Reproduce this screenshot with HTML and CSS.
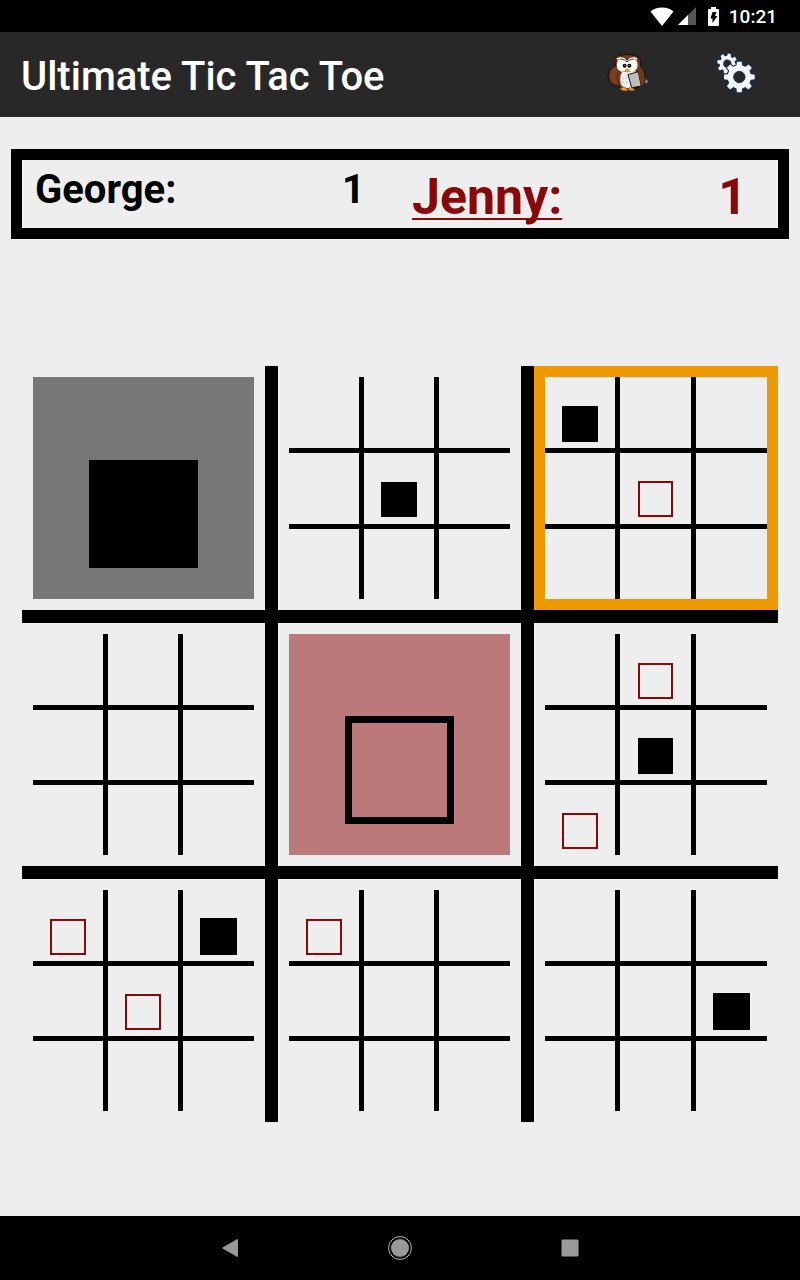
FILE: index.html
```html
<!DOCTYPE html>
<html lang="en">
<head>
  <meta charset="utf-8">
  <meta name="viewport" content="width=device-width, initial-scale=1">
  <title>Ultimate Tic Tac Toe</title>
  <link rel="stylesheet" href="styles.css">
</head>
<body>
  <div class="status-bar">
    <svg class="wifi-icon" viewBox="0 0 24 19" aria-hidden="true"><path fill="#fff" d="M12 19 0.5 4.5C3.5 2 7.5 .5 12 .5s8.500 1.500 11.500 4z"/></svg>
    <svg class="signal-icon" viewBox="0 0 18 18" aria-hidden="true"><path fill="#555" d="M18 0v18H0z"/><path fill="#fff" d="M10 8v10H0z"/></svg>
    <svg class="battery-icon" viewBox="0 0 11 19" aria-hidden="true"><path fill="#fff" d="M3 0h5v2h2q1 0 1 1v15q0 1-1 1H1q-1 0-1-1V3q0-1 1-1h2z"/><path fill="#000" d="M4.500 5h4L7 9h2.500L4.500 16V11.500H2.500z"/></svg>
    <time class="clock">10:21</time>
  </div>

  <header class="app-bar">
    <h1 class="app-title">Ultimate Tic Tac Toe</h1>
    <button class="icon-button" type="button" aria-label="Computer player">
      <svg viewBox="0 0 180 180" aria-hidden="true">
        <path d="M130 98l9 2 3 6 6 1-5 7-11 3z" fill="#8a8a8a" stroke="#111" stroke-width="2"/>
        <path d="M48 36C62 26 103 26 115 37c8 8 9 20 7 28 13 11 17 28 11 48-3 8-10 11-16 10-13 12-45 12-59 1-15 0-29-6-33-24-4-18 5-33 24-38-6-9-7-18-1-26z" fill="#71391b" stroke="#160b05" stroke-width="3"/>
        <path d="M49 63c-15 4-24 18-20 37 3 14 14 20 28 19-8-13-9-31 1-44z" fill="#7c4020" stroke="#3d1d0d" stroke-width="2"/>
        <path d="M67 80c-8 12-9 31-1 43 10 9 31 8 39-1l2-43z" fill="#eee"/>
        <path d="M65 98l8 5M65 108l8 5M76 96l7 5M77 109l7 4" stroke="#aaa" stroke-width="2"/>
        <ellipse cx="67" cy="60" rx="17" ry="20" fill="#fff"/>
        <ellipse cx="96" cy="60" rx="17" ry="20" fill="#fff"/>
        <path d="M51 42q13-7 25 2M86 44q13-9 25-2" fill="none" stroke="#fff" stroke-width="5"/>
        <path d="M61 42q13 0 20 9 7-9 21-9" fill="none" stroke="#71391b" stroke-width="3"/>
        <circle cx="74" cy="62" r="6" fill="#000"/><circle cx="88" cy="62" r="6" fill="#000"/>
        <circle cx="75" cy="61" r="1.500" fill="#fff"/><circle cx="87" cy="61" r="1.500" fill="#fff"/>
        <path d="M75 73q7-5 13 0l-6 12z" fill="#f39b19"/>
        <path d="M84 89l31-9 8 40-1 4-27 4z" fill="#bdbdbd" stroke="#111" stroke-width="3"/>
        <path d="M115 81q19 5 18 31-2 9-10 10z" fill="#71391b"/>
        <path d="M61 133q1-6 6-5 4-1 7 1 5-2 10 6-11 6-23-2zM84 132q4-6 9-3 4-2 7 2 4 1 3 5-10 4-19-4z" fill="#ffa31a" stroke="#9c4f08" stroke-width="2"/>
      </svg>
    </button>
    <button class="icon-button" type="button" aria-label="Settings">
      <svg viewBox="0 0 180 180" aria-hidden="true">
        <defs>
          <g id="gear">
            <circle r="35"/>
            <path id="bar" d="M-7-46H7L10-25V25L7 46H-7L-10 25V-25z"/>
            <use href="#bar" transform="rotate(45)"/>
            <use href="#bar" transform="rotate(90)"/>
            <use href="#bar" transform="rotate(135)"/>
          </g>
        </defs>
        <g transform="translate(64 56) rotate(12) scale(.66)">
          <use href="#gear" fill="#102f5c" stroke="#102f5c" stroke-width="6"/>
          <use href="#gear" fill="#f5f7fa"/>
          <circle r="17" fill="#282828" stroke="#102f5c" stroke-width="3"/>
        </g>
        <g transform="translate(100 96)">
          <use href="#gear" fill="#102f5c" stroke="#102f5c" stroke-width="6"/>
          <use href="#gear" fill="#f5f7fa"/>
          <circle r="17" fill="#282828" stroke="#102f5c" stroke-width="3"/>
        </g>
      </svg>
    </button>
  </header>

  <main class="game">
    <section class="scores" aria-label="Scores">
      <div class="player"><span class="player-name">George:</span><span>1</span></div>
      <div class="player player-active"><span class="player-name">Jenny:</span><span>1</span></div>
    </section>
    <div class="board-area">
      <div class="board" id="board"></div>
    </div>
  </main>

  <nav class="nav-bar" aria-label="System">
    <button class="nav-button" type="button" aria-label="Back"><svg viewBox="0 0 24 24" aria-hidden="true"><path fill="#999" stroke="#999" stroke-linejoin="round" d="M19.500 3.500v17L4.500 12z"/></svg></button>
    <button class="nav-button" type="button" aria-label="Home"><svg viewBox="0 0 24 24" aria-hidden="true"><circle cx="12" cy="12" r="11.400" fill="none" stroke="#bbb"/><circle cx="12" cy="12" r="9" fill="#999"/></svg></button>
    <button class="nav-button" type="button" aria-label="Recent apps"><svg viewBox="0 0 24 24" aria-hidden="true"><rect x="3.500" y="3.500" width="17" height="17" rx="1" fill="#999"/></svg></button>
  </nav>
  <script src="script.js"></script>
</body>
</html>
```

FILE: styles.css
```css
* {
  box-sizing: border-box;
}

body {
  margin: 0;
  min-height: 100vh;
  display: flex;
  flex-direction: column;
  background: #eee;
  color: #000;
  font-family: Roboto, "Noto Sans", sans-serif;
}

button {
  margin: 0;
  padding: 0;
  border: 0;
  background: none;
}

svg {
  display: block;
}

.status-bar {
  height: 32px;
  padding-right: 23px;
  display: flex;
  align-items: center;
  justify-content: flex-end;
  background: #000;
  color: #fff;
}

.wifi-icon {
  width: 24px;
  height: 19px;
  margin-right: 4px;
}

.signal-icon {
  width: 18px;
  height: 18px;
  margin-right: 12px;
}

.battery-icon {
  width: 11px;
  height: 19px;
  margin-right: 10px;
}

.clock {
  font-size: 19px;
  font-weight: 500;
}

.app-bar {
  height: 85px;
  padding: 0 34px 0 21px;
  display: flex;
  align-items: center;
  gap: 46px;
  background: #282828;
  color: #fff;
}

.app-title {
  flex: 1;
  margin: 0;
  padding-top: 4px;
  font-size: 40px;
  line-height: 48px;
  font-weight: 500;
}

.icon-button,
.icon-button svg {
  width: 60px;
  height: 60px;
}

.game {
  flex: 1;
  padding: 32px 11px 0;
  display: flex;
  flex-direction: column;
}

.scores {
  min-height: 90px;
  display: grid;
  grid-template-columns: 1fr 1fr;
  border: 11px solid #000;
}

.player {
  padding: 6px 35px 0 13px;
  display: flex;
  justify-content: space-between;
  font-size: 40px;
  line-height: 48px;
  font-weight: 700;
}

.player-active {
  padding: 7px 31px 0 12px;
  color: #8b0808;
  font-size: 50px;
  line-height: 60px;
}

.player-active .player-name {
  text-decoration: underline 2px;
  text-decoration-skip-ink: none;
  text-underline-offset: 4px;
}

.board-area {
  flex: 1;
  padding: 33px 11px 0;
  display: flex;
  align-items: center;
}

.board {
  width: 100%;
  aspect-ratio: 1;
  display: grid;
  grid-template-columns: 243fr 243fr 244fr;
  grid-template-rows: 244fr 243fr 243fr;
  gap: 13px;
  background: #000;
}

.field {
  min-width: 0;
  min-height: 0;
  display: grid;
  border: 11px solid #eee;
}

.field-next {
  border-color: #ee9900;
}

.cells {
  display: grid;
  grid-template-columns: 70fr 70fr 71fr;
  grid-template-rows: 71fr 70fr 70fr;
  gap: 5px;
  background: #000;
}

.cell,
.won {
  display: flex;
  align-items: flex-end;
  justify-content: center;
  background: #eee;
}

.mark {
  width: 51%;
  aspect-ratio: 1;
  margin-bottom: 9%;
}

.mark-solid {
  background: #000;
}

.mark-outline {
  border: 2px solid #8b0808;
}

.won .mark {
  width: 49%;
  margin-bottom: 14%;
}

.won-solid {
  background: #777;
}

.won-outline {
  background: #bb7979;
}

.won .mark-outline {
  border: 7px solid #000;
}

.nav-bar {
  height: 64px;
  display: flex;
  align-items: center;
  justify-content: center;
  gap: 146px;
  background: #000;
}

.nav-button,
.nav-button svg {
  width: 24px;
  height: 24px;
}
```

FILE: script.js
```js
// One string per field: X = solid mark, O = outline mark, . = free cell.
const fields = [
  { winner: "X" },
  { cells: "....X...." },
  { cells: "X...O....", next: true },
  { cells: "........." },
  { winner: "O" },
  { cells: ".O..X.O.." },
  { cells: "O.X.O...." },
  { cells: "O........" },
  { cells: ".....X..." }
];

const kinds = { X: "solid", O: "outline" };

function element(tag, className, parent) {
  const node = document.createElement(tag);
  node.className = className;
  parent.append(node);
  return node;
}

const board = document.getElementById("board");

fields.forEach((data, fieldIndex) => {
  const field = element("div", data.next ? "field field-next" : "field", board);
  if (data.winner) {
    const won = element("div", "won won-" + kinds[data.winner], field);
    element("span", "mark mark-" + kinds[data.winner], won);
    return;
  }
  const cells = element("div", "cells", field);
  [...data.cells].forEach((value, cellIndex) => {
    const cell = element("button", "cell", cells);
    cell.type = "button";
    cell.setAttribute("aria-label", `Field ${fieldIndex + 1}, cell ${cellIndex + 1}`);
    if (kinds[value]) {
      element("span", "mark mark-" + kinds[value], cell);
    }
  });
});
```
